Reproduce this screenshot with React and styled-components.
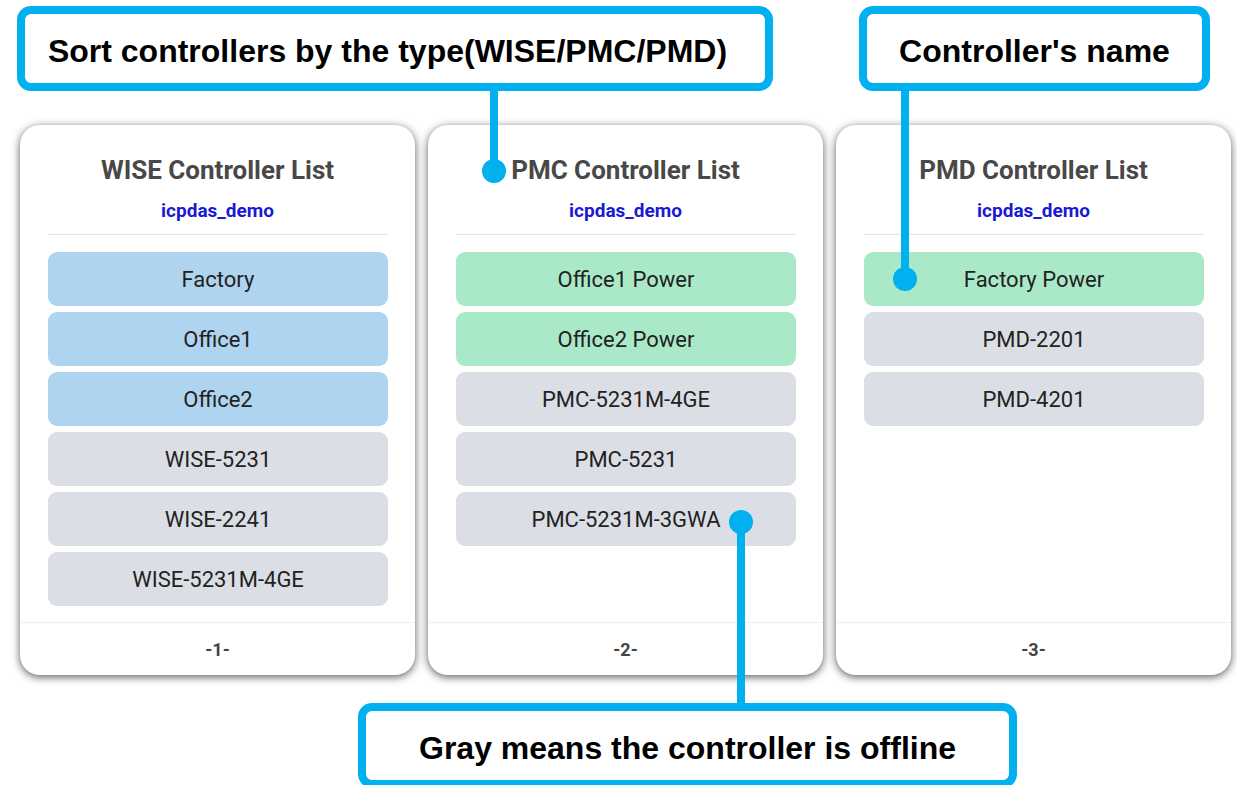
import React from 'react';
import styled, { createGlobalStyle } from 'styled-components';

const GlobalStyle = createGlobalStyle`
  html, body {
    margin: 0;
    padding: 0;
    background: #fff;
  }
  * {
    box-sizing: border-box;
  }
`;

const Page = styled.div`
  position: relative;
  width: 1237px;
  height: 785px;
  overflow: hidden;
  background: #fff;
  font-family: Roboto, "Liberation Sans", sans-serif;
`;

const TopRow = styled.div`
  display: flex;
  padding-top: 6px;
`;

const Callout = styled.div`
  display: flex;
  align-items: center;
  justify-content: center;
  width: ${(p) => p.$width}px;
  height: 85px;
  margin-left: ${(p) => p.$left}px;
  padding: 5px ${(p) => p.$padRight || 0}px 0 0;
  border: 8px solid #00b0ef;
  border-radius: 14px;
  background: #fff;
  font-family: "Liberation Sans", Arial, sans-serif;
  font-weight: 700;
  font-size: 32px;
  color: #000;
  white-space: nowrap;
`;

const CardRow = styled.div`
  display: flex;
  gap: 13px;
  margin-top: 34px;
  padding-left: 20px;
`;

const Card = styled.div`
  display: flex;
  flex-direction: column;
  width: 395px;
  height: 550px;
  background: #fff;
  border-radius: 20px;
  box-shadow: 0 2px 9px rgba(0, 0, 0, 0.65);
`;

const Title = styled.div`
  padding-top: 30px;
  text-align: center;
  font-size: 26px;
  line-height: 30px;
  font-weight: 700;
  color: #484848;
`;

const Account = styled.div`
  margin-top: 16px;
  text-align: center;
  font-size: 19px;
  line-height: 20px;
  font-weight: 700;
  color: #1a1ad2;
`;

const Divider = styled.div`
  height: 1px;
  margin: 13px 27px 0 28px;
  background: #e4e4e4;
`;

const List = styled.div`
  flex: 1;
  display: flex;
  flex-direction: column;
  gap: 6px;
  padding: 17px 27px 0 28px;
`;

const itemColors = {
  wise: '#aed4ef',
  power: '#aae9c8',
  offline: '#dcdee5',
};

const Item = styled.div`
  display: flex;
  align-items: center;
  justify-content: center;
  height: 54px;
  border-radius: 9px;
  background: ${(p) => itemColors[p.$state]};
  font-size: 22px;
  color: #222;
`;

const Footer = styled.div`
  display: flex;
  align-items: center;
  justify-content: center;
  height: 53px;
  border-top: 1px solid #eeeeee;
  font-size: 18px;
  font-weight: 700;
  color: #444;
`;

const BottomRow = styled.div`
  display: flex;
  margin-top: 28px;
`;

const Leader = styled.div`
  position: absolute;
  left: ${(p) => p.$x - 4}px;
  top: ${(p) => p.$top}px;
  width: 8px;
  height: ${(p) => p.$bottom - p.$top}px;
  background: #00b0ef;
`;

const Dot = styled.div`
  position: absolute;
  left: ${(p) => p.$x - 12}px;
  top: ${(p) => p.$y - 12}px;
  width: 24px;
  height: 24px;
  border-radius: 50%;
  background: #00b0ef;
`;

const lists = [
  {
    title: 'WISE Controller List',
    page: '-1-',
    items: [
      ['Factory', 'wise'],
      ['Office1', 'wise'],
      ['Office2', 'wise'],
      ['WISE-5231', 'offline'],
      ['WISE-2241', 'offline'],
      ['WISE-5231M-4GE', 'offline'],
    ],
  },
  {
    title: 'PMC Controller List',
    page: '-2-',
    items: [
      ['Office1 Power', 'power'],
      ['Office2 Power', 'power'],
      ['PMC-5231M-4GE', 'offline'],
      ['PMC-5231', 'offline'],
      ['PMC-5231M-3GWA', 'offline'],
    ],
  },
  {
    title: 'PMD Controller List',
    page: '-3-',
    items: [
      ['Factory Power', 'power'],
      ['PMD-2201', 'offline'],
      ['PMD-4201', 'offline'],
    ],
  },
];

const leaders = [
  { x: 494, top: 88, bottom: 171, dotY: 171 },
  { x: 905, top: 88, bottom: 279, dotY: 279 },
  { x: 741, top: 522, bottom: 706, dotY: 522 },
];

function App() {
  return (
    <Page>
      <GlobalStyle />
      <TopRow>
        <Callout $left={17} $width={756} $padRight={15}>
          Sort controllers by the type(WISE/PMC/PMD)
        </Callout>
        <Callout $left={86} $width={351}>
          Controller's name
        </Callout>
      </TopRow>

      <CardRow>
        {lists.map((list) => (
          <Card key={list.title}>
            <Title>{list.title}</Title>
            <Account>icpdas_demo</Account>
            <Divider />
            <List>
              {list.items.map(([name, state]) => (
                <Item key={name} $state={state}>
                  {name}
                </Item>
              ))}
            </List>
            <Footer>{list.page}</Footer>
          </Card>
        ))}
      </CardRow>

      <BottomRow>
        <Callout $left={358} $width={659}>
          Gray means the controller is offline
        </Callout>
      </BottomRow>

      {leaders.map((l) => (
        <React.Fragment key={l.x}>
          <Leader $x={l.x} $top={l.top} $bottom={l.bottom} />
          <Dot $x={l.x} $y={l.dotY} />
        </React.Fragment>
      ))}
    </Page>
  );
}

export default App;
